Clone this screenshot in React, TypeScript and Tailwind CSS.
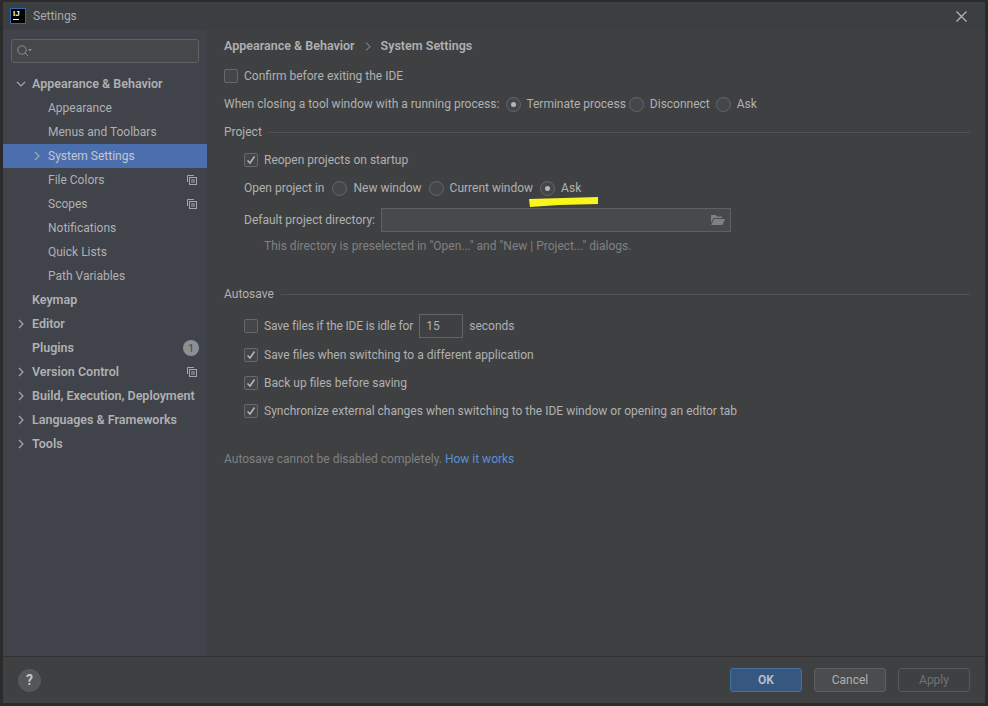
const tree = [
  { label: "Appearance & Behavior", level: 0, bold: true, arrow: "down" },
  { label: "Appearance", level: 1 },
  { label: "Menus and Toolbars", level: 1 },
  { label: "System Settings", level: 1, arrow: "right", selected: true },
  { label: "File Colors", level: 1, copy: true },
  { label: "Scopes", level: 1, copy: true },
  { label: "Notifications", level: 1 },
  { label: "Quick Lists", level: 1 },
  { label: "Path Variables", level: 1 },
  { label: "Keymap", level: 0, bold: true },
  { label: "Editor", level: 0, bold: true, arrow: "right" },
  { label: "Plugins", level: 0, bold: true, badge: "1" },
  { label: "Version Control", level: 0, bold: true, arrow: "right", copy: true },
  { label: "Build, Execution, Deployment", level: 0, bold: true, arrow: "right" },
  { label: "Languages & Frameworks", level: 0, bold: true, arrow: "right" },
  { label: "Tools", level: 0, bold: true, arrow: "right" },
];

function Arrow({ dir }: { dir: string }) {
  return (
    <svg width="10" height="10" viewBox="0 0 10 10" fill="none" stroke="#a5a8aa" strokeWidth="1.2">
      {dir === "down" ? <path d="M1 3 L5 7 L9 3" /> : <path d="M3 1 L7 5 L3 9" />}
    </svg>
  );
}

function CopyIcon() {
  return (
    <svg width="10" height="10" viewBox="0 0 10 10" fill="none" stroke="#a3a6a9" strokeWidth="1">
      <path d="M0.5 7 V0.5 H7" />
      <rect x="2.5" y="2.5" width="7" height="7" />
      <path d="M4 5 H8 M4 7 H8" />
    </svg>
  );
}

function Checkbox({ checked }: { checked?: boolean }) {
  return (
    <span className="flex h-[14px] w-[14px] shrink-0 items-center justify-center rounded-[2px] border border-[#666869] bg-[#44474a]">
      {checked && (
        <svg width="10" height="10" viewBox="0 0 10 10" fill="none" stroke="#b4b6b8" strokeWidth="1.6">
          <path d="M1.5 5.5 L4 8 L8.5 1.5" />
        </svg>
      )}
    </span>
  );
}

function Radio({ checked }: { checked?: boolean }) {
  return (
    <span className="flex h-[15px] w-[15px] shrink-0 items-center justify-center rounded-full border border-[#65686a] bg-[#43474a]">
      {checked && <span className="h-[5px] w-[5px] rounded-full bg-[#b4b6b8]" />}
    </span>
  );
}

function Section({ title }: { title: string }) {
  return (
    <div className="flex h-[20px] items-center gap-[7px]">
      <span>{title}</span>
      <span className="h-px flex-1 bg-[#515253]" />
    </div>
  );
}

function CheckRow({ checked, label }: { checked?: boolean; label: string }) {
  return (
    <div className="flex h-[28px] items-center gap-[6px] pl-[20px]">
      <Checkbox checked={checked} />
      <span>{label}</span>
    </div>
  );
}

export default function App() {
  return (
    <div className="relative flex h-[706px] w-[988px] flex-col overflow-hidden bg-[#2b2b2b] px-[3px] pb-[3px] pt-[2px] text-[12px] leading-none text-[#b0b1b2] font-['Roboto','Open_Sans',sans-serif]">
      <div className="flex h-[28px] shrink-0 items-center justify-between bg-[#3c3f41] pl-[7px] pr-[18px]">
        <div className="flex items-center gap-[7px]">
          <div className="flex h-[16px] w-[16px] flex-col border border-[#2d6ca8] bg-black pl-[2px] pt-[1px] text-white">
            <span className="text-[8px] font-bold leading-[8px] font-['Liberation_Sans',sans-serif]">IJ</span>
            <span className="mt-[1px] h-px w-[6px] bg-white" />
          </div>
          <span className="text-[#a9abac]">Settings</span>
        </div>
        <svg width="11" height="11" viewBox="0 0 11 11" fill="none" stroke="#b5b6b7" strokeWidth="1.2">
          <path d="M0.5 0.5 L10.5 10.5 M10.5 0.5 L0.5 10.5" />
        </svg>
      </div>

      <div className="flex min-h-0 flex-1">
        <aside className="flex w-[204px] shrink-0 flex-col bg-[#40434a]">
          <div className="px-[8px] pt-[9px]">
            <div className="flex h-[24px] items-center gap-px rounded-[3px] border border-[#5f6263] bg-[#45484b] pl-[5px]">
              <svg width="16" height="12" viewBox="0 0 16 12" fill="none" stroke="#8b8d8f" strokeWidth="1">
                <circle cx="5" cy="5" r="4.2" />
                <path d="M8 8 L11 11" />
                <path d="M11 4 H15 L13 6.5 Z" fill="#8b8d8f" stroke="none" />
              </svg>
            </div>
          </div>
          <div className="mt-[9px]">
            {tree.map((item) => (
              <div
                key={item.label}
                className={`flex h-[24px] items-center pr-[8px] ${item.selected ? "bg-[#4b6eaf] text-[#c4c8d0]" : ""} ${item.level === 0 ? "pl-[13px]" : "pl-[29px]"}`}
              >
                <span className="flex w-[16px] shrink-0 items-center">{item.arrow && <Arrow dir={item.arrow} />}</span>
                <span className={`flex-1 whitespace-nowrap ${item.bold ? "text-[12.5px] font-semibold" : ""}`}>{item.label}</span>
                {item.copy && (
                  <span className="mr-[2px] flex">
                    <CopyIcon />
                  </span>
                )}
                {item.badge && (
                  <span className="flex h-[16px] w-[16px] items-center justify-center rounded-full bg-[#8d9093] text-[11px] text-[#45484b]">
                    {item.badge}
                  </span>
                )}
              </div>
            ))}
          </div>
        </aside>

        <main className="flex-1 bg-[#3f4041] pl-[17px] pr-[15px]">
          <div className="flex h-[23px] items-end gap-[10px] text-[12.5px] font-semibold">
            <span className="leading-[14px]">Appearance &amp; Behavior</span>
            <svg className="mb-[2px]" width="6" height="9" viewBox="0 0 6 9" fill="none" stroke="#a0a1a2" strokeWidth="1">
              <path d="M1 0.5 L5 4.5 L1 8.5" />
            </svg>
            <span className="leading-[14px]">System Settings</span>
          </div>

          <div className="mt-[9px] flex h-[28px] items-center gap-[6px]">
            <Checkbox />
            <span>Confirm before exiting the IDE</span>
          </div>
          <div className="flex h-[28px] items-center">
            <span>When closing a tool window with a running process:</span>
            <span className="ml-[7px] mr-[5px]"><Radio checked /></span>
            <span>Terminate process</span>
            <span className="ml-[3px] mr-[6px]"><Radio /></span>
            <span>Disconnect</span>
            <span className="ml-[6px] mr-[6px]"><Radio /></span>
            <span>Ask</span>
          </div>

          <div className="mt-[4px]"><Section title="Project" /></div>
          <div className="mt-[4px]"><CheckRow checked label="Reopen projects on startup" /></div>
          <div className="flex h-[28px] items-center pl-[20px]">
            <span>Open project in</span>
            <span className="ml-[8px] mr-[6px]"><Radio /></span>
            <span>New window</span>
            <span className="ml-[7px] mr-[6px]"><Radio /></span>
            <span>Current window</span>
            <span className="ml-[7px] mr-[6px]"><Radio checked /></span>
            <span>Ask</span>
          </div>
          <div className="mt-[6px] flex h-[24px] items-center pl-[20px]">
            <span>Default project directory:</span>
            <div className="ml-[6px] flex h-[24px] w-[350px] items-center justify-end border border-[#5d6162] bg-[#464a4b] pr-[5px]">
              <svg width="15" height="12" viewBox="0 0 15 12" fill="#7e8183">
                <path d="M1 1 H6 L7 2.5 H12 V4 H3.5 L1 9 Z" />
                <path d="M4 5 H15 L12.5 11 H1.2 Z" />
              </svg>
            </div>
          </div>
          <div className="flex h-[20px] items-end pl-[40px] text-[#7f8183]">
            <span>This directory is preselected in "Open..." and "New | Project..." dialogs.</span>
          </div>

          <div className="mt-[32px]"><Section title="Autosave" /></div>
          <div className="mb-px mt-[8px] flex h-[28px] items-center gap-[6px] pl-[20px]">
            <Checkbox />
            <span className="tracking-[-0.15px]">Save files if the IDE is idle for</span>
            <span className="flex h-[24px] w-[44px] items-center border border-[#626465] pl-[6px]">15</span>
            <span>seconds</span>
          </div>
          <CheckRow checked label="Save files when switching to a different application" />
          <CheckRow checked label="Back up files before saving" />
          <CheckRow checked label="Synchronize external changes when switching to the IDE window or opening an editor tab" />
          <div className="mt-[20px] flex h-[28px] items-center gap-[3px] text-[#7f8183]">
            <span>Autosave cannot be disabled completely.</span>
            <span className="text-[#5c8fd6]">How it works</span>
          </div>
        </main>
      </div>

      <footer className="flex h-[47px] shrink-0 items-center justify-between border-t border-[#323232] bg-[#3f4041] pl-[15px] pr-[15px]">
        <span className="flex h-[23px] w-[23px] items-center justify-center rounded-full border border-[#5a5d5f] bg-[#53575a] text-[14px] font-bold text-[#c4c5c6]">
          ?
        </span>
        <div className="flex gap-[12px]">
          <span className="flex h-[24px] w-[72px] items-center justify-center rounded-[3px] border border-[#46709f] bg-[#365880] font-semibold text-[#b9c2cd]">
            OK
          </span>
          <span className="flex h-[24px] w-[72px] items-center justify-center rounded-[3px] border border-[#5e6060] bg-[#4a4c4d]">
            Cancel
          </span>
          <span className="flex h-[24px] w-[72px] items-center justify-center rounded-[3px] border border-[#565758] text-[#707274]">
            Apply
          </span>
        </div>
      </footer>

      <svg className="absolute left-[529px] top-[196px]" width="69" height="11" viewBox="0 0 69 11" fill="#f7f71c">
        <path d="M0 3 L69 1 V8 L30 9 L1 11 Z" />
      </svg>
    </div>
  );
}
